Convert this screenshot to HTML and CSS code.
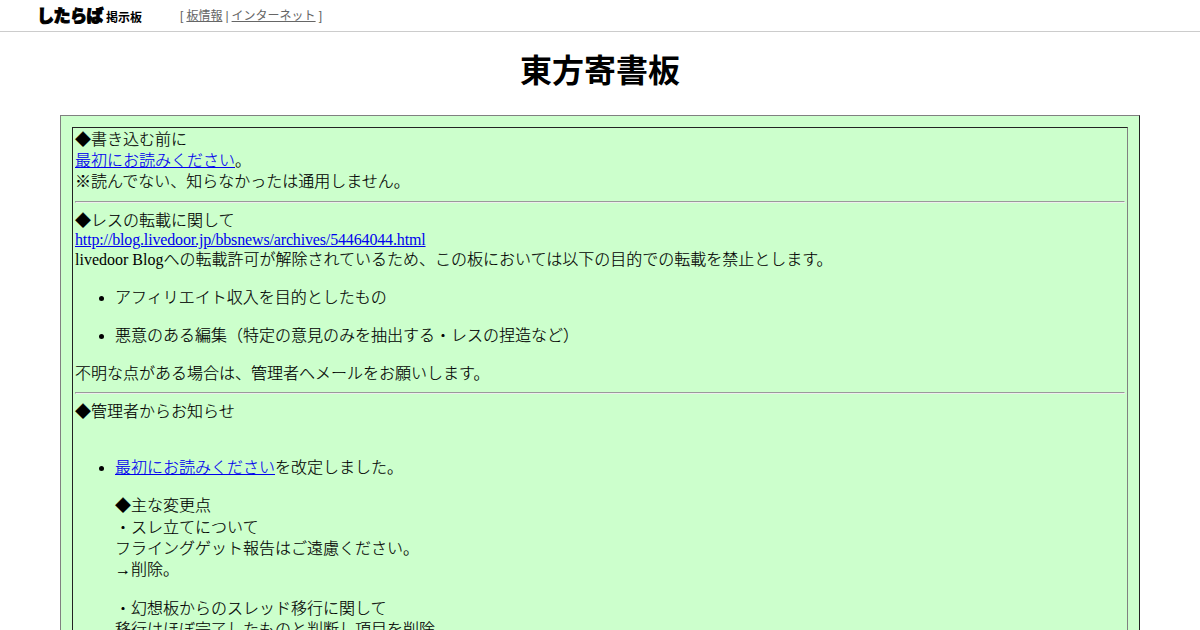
FILE: index.html
```html
<!DOCTYPE html>
<html lang="ja">
<head>
<meta charset="utf-8">
<title>東方寄書板</title>
<link rel="stylesheet" href="styles.css">
</head>
<body>
<header class="topbar">
  <a class="logo" href="#"><span class="logo-main">したらば</span><span class="logo-sub">掲示板</span></a>
  <div class="crumbs">[ <a href="#">板情報</a> | <a href="#">インターネット</a> ]</div>
</header>
<h1 class="title">東方寄書板</h1>
<table class="rule-table">
  <tr>
    <td class="rule-cell">
      ◆書き込む前に<br>
      <a href="#">最初にお読みください</a>。<br>
      ※読んでない、知らなかったは通用しません。
      <hr>
      ◆レスの転載に関して
      <a class="url" href="#">http://blog.livedoor.jp/bbsnews/archives/54464044.html</a>
      <span class="latin">livedoor Blog</span>への転載許可が解除されているため、この板においては以下の目的での転載を禁止とします。
      <ul class="notes">
        <li>アフィリエイト収入を目的としたもの</li>
        <li>悪意のある編集（特定の意見のみを抽出する・レスの捏造など）</li>
      </ul>
      不明な点がある場合は、管理者へメールをお願いします。
      <hr>
      ◆管理者からお知らせ
      <div class="blank"></div>
      <ul class="notices">
        <li><a href="#">最初にお読みください</a>を改定しました。
          <p>◆主な変更点<br>
          ・スレ立てについて<br>
          フライングゲット報告はご遠慮ください。<br>
          →削除。</p>
          <p>・幻想板からのスレッド移行に関して<br>
          移行はほぼ完了したものと判断し項目を削除。</p>
        </li>
      </ul>
    </td>
  </tr>
</table>
</body>
</html>
```
FILE: styles.css
```css
html, body { margin: 0; padding: 0; background: #fff; }
body {
  font-family: "Liberation Serif", "Noto Sans CJK JP", serif;
  font-size: 16px;
  color: #000;
}
.topbar {
  display: flex;
  align-items: center;
  height: 29px;
  padding-bottom: 2px;
  border-bottom: 1px solid #ccc;
  padding-left: 37px;
  font-family: "Liberation Sans", "Noto Sans CJK JP", sans-serif;
}
.logo {
  display: flex;
  align-items: baseline;
  width: 143px;
  color: #000;
  text-decoration: none;
  font-family: "Noto Sans CJK JP", sans-serif;
  font-weight: 900;
  white-space: nowrap;
}
.logo-main { font-size: 17px; letter-spacing: -0.5px; -webkit-text-stroke: 1px #000; }
.logo-sub { font-size: 12px; font-weight: 700; margin-left: 3px; }
.crumbs { font-size: 12px; font-weight: 400; color: #666; word-spacing: -0.3px; }
.crumbs a { color: #666; }
.title {
  font-size: 32px;
  font-weight: 700;
  line-height: 36px;
  text-align: center;
  margin: 21px 0 26px;
}
.rule-table {
  width: 90%;
  margin: 0 auto;
  background: #cfc;
  border: 1px solid;
  border-color: #808080 #222 #222 #808080;
  border-spacing: 11px;
}
.rule-cell {
  padding: 1px 2px 2px;
  border: 1px solid;
  border-color: #222 #808080 #808080 #222;
  font-weight: 300;
  line-height: 21.2px;
  -webkit-text-stroke: 0.15px;
}
.rule-cell a { color: #00e; }
.latin { font-weight: 400; -webkit-text-stroke: 0; }
.rule-cell .url { display: block; font-weight: 400; line-height: 18.6px; letter-spacing: -0.15px; -webkit-text-stroke: 0; }
.blank { height: 18px; }
hr { margin: 8px 0 7px; }
ul { margin: 16px 0; }
.notes { margin-bottom: 16.6px; }
.notes li + li { margin-top: 17.6px; }
.notices p { margin: 17.6px 0 0; }
```
